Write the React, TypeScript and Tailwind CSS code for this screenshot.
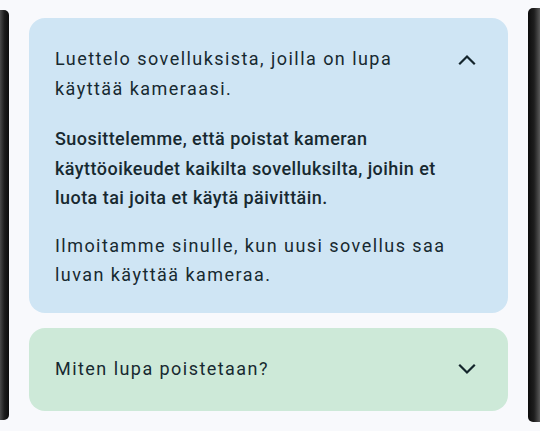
import React from 'react';

function Chevron({ up }: { up?: boolean }) {
  return (
    <svg width="24" height="24" viewBox="0 0 24 24" fill="none" className="shrink-0">
      <path
        d={up ? 'M5 15.5L12 8.5L19 15.5' : 'M5 8.5L12 15.5L19 8.5'}
        stroke="#14252c"
        strokeWidth="2.2"
        strokeLinecap="square"
      />
    </svg>
  );
}

export default function App() {
  return (
    <div
      className="flex h-[431px] w-[540px] overflow-hidden bg-[#f8f9fc] text-[#172930]"
      style={{ fontFamily: 'Roboto, "Noto Sans", sans-serif' }}
    >
      {/* left bezel */}
      <div className="mt-[10px] mb-[11px] w-[9px] shrink-0 rounded-r-[5px] bg-gradient-to-r from-[#4a4a4a] via-[#1c1c1c] to-[#0c0c0c]" />

      {/* sheet */}
      <div className="flex flex-1 flex-col gap-[15px] px-5 pt-[18px]">
        {/* expanded card */}
        <div className="rounded-[16px] bg-[#cfe5f4] pl-[26px] pr-[29px] pt-[26px] pb-[23px] text-[18px] leading-[29.5px] tracking-[1.45px]">
          <div className="flex items-start gap-4">
            <p className="flex-1">Luettelo sovelluksista, joilla on lupa käyttää kameraasi.</p>
            <div className="mt-[4px]">
              <Chevron up />
            </div>
          </div>
          <p className="mt-[21px] font-medium tracking-[0.45px]">
            Suosittelemme, että poistat kameran käyttöoikeudet kaikilta sovelluksilta, joihin et luota tai joita et käytä päivittäin.
          </p>
          <p className="mt-[18px]">Ilmoitamme sinulle, kun uusi sovellus saa luvan käyttää kameraa.</p>
        </div>

        {/* collapsed card */}
        <div className="flex h-[83px] items-center gap-4 rounded-[16px] bg-[#cde9d8] pl-[26px] pr-[29px] text-[18px] leading-[29.5px] tracking-[1.45px]">
          <p className="flex-1">Miten lupa poistetaan?</p>
          <Chevron />
        </div>
      </div>

      {/* right bezel */}
      <div className="mt-[8px] mb-[9px] w-[12px] shrink-0 rounded-l-[5px] bg-gradient-to-r from-[#0c0c0c] via-[#1e1e1e] to-[#5a5a5a]" />
    </div>
  );
}
